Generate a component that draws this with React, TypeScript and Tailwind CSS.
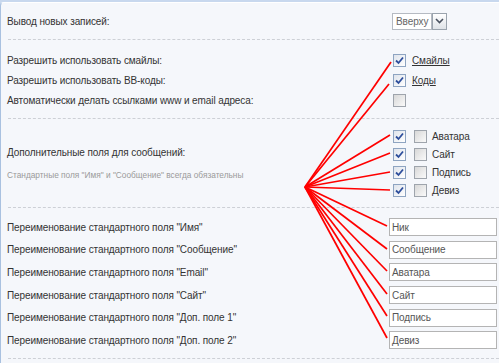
import React from 'react'

function Check({ on }: { on: boolean }) {
  return (
    <span
      className={`w-[13px] h-[13px] border flex items-center justify-center shrink-0 ${
        on ? 'border-[#8ea4c1] bg-gradient-to-br from-[#dfe4ec] to-white' : 'border-[#9ea4ac] bg-gradient-to-br from-[#d8d8d8] to-[#fafafa]'
      }`}
    >
      {on && (
        <svg width="9" height="9" viewBox="0 0 9 9">
          <path d="M1 4.5 L3.5 7 L8 1.5" fill="none" stroke="#2d4e9c" strokeWidth="1.8" />
        </svg>
      )}
    </span>
  )
}

function Divider() {
  return <div className="ml-[1px] h-0 border-t border-dashed border-[#cdd0d6]" />
}

const extraFields = ['Аватара', 'Сайт', 'Подпись', 'Девиз']

const renames = [
  { label: 'Имя', value: 'Ник' },
  { label: 'Сообщение', value: 'Сообщение' },
  { label: 'Email', value: 'Аватара' },
  { label: 'Сайт', value: 'Сайт' },
  { label: 'Доп. поле 1', value: 'Подпись' },
  { label: 'Доп. поле 2', value: 'Девиз' },
]

// куда тянутся красные линии из одной точки
const focus = [305, 187]
const targets = [
  [391, 62], [389, 84],
  [390, 135], [390, 153], [390, 172], [390, 190],
  [387, 226], [387, 249], [387, 271], [387, 294], [387, 316], [387, 338],
]

export default function App() {
  return (
    <div className="relative w-[499px] h-[363px] overflow-hidden bg-[#c8d8ee] pt-[2px] font-['Liberation_Sans',Arial,sans-serif] text-[10px] tracking-[-0.1px] text-[#333]">
      <div className="h-full bg-[#f5f7fb] border-l border-t border-l-[#a9c1e0] border-t-white rounded-tl-[4px] pl-[6px]">
        {/* вывод */}
        <div className="flex items-center h-[36px]">
          <span className="flex-1">Вывод новых записей:</span>
          <div className="w-[110px] pl-[3px]">
            <div className="flex h-[17px] w-[55px]">
              <div className="w-[40px] border border-[#b5bac2] bg-white text-[#666] flex items-center pl-[3px]">Вверху</div>
              <div className="w-[15px] border border-[#9aa3ad] bg-gradient-to-b from-white to-[#dfe3e8] flex items-center justify-center">
                <svg width="9" height="6" viewBox="0 0 9 6">
                  <path d="M1 1 L4.5 4.5 L8 1" fill="none" stroke="#4a5260" strokeWidth="1.6" />
                </svg>
              </div>
            </div>
          </div>
        </div>
        <Divider />

        {/* смайлы / коды */}
        <div className="pt-[10px] pb-[8px]">
          <div className="flex items-center h-[20px]">
            <span className="flex-1">Разрешить использовать смайлы:</span>
            <div className="w-[110px] pl-[4px] flex items-center gap-[6px]">
              <Check on />
              <span className="underline">Смайлы</span>
            </div>
          </div>
          <div className="flex items-center h-[20px]">
            <span className="flex-1">Разрешить использовать BB-коды:</span>
            <div className="w-[110px] pl-[4px] flex items-center gap-[6px]">
              <Check on />
              <span className="underline">Коды</span>
            </div>
          </div>
          <div className="flex items-center h-[20px]">
            <span className="flex-1">Автоматически делать ссылками www и email адреса:</span>
            <div className="w-[110px] pl-[4px] flex items-center">
              <Check on={false} />
            </div>
          </div>
        </div>
        <Divider />

        {/* доп поля */}
        <div className="flex pt-[8px] pb-[8px]">
          <div className="flex-1 flex flex-col justify-center gap-[9px]">
            <span>Дополнительные поля для сообщений:</span>
            <span className="text-[8.3px] tracking-normal text-[#9a9a9a]">Стандартные поля "Имя" и "Сообщение" всегда обязательны</span>
          </div>
          <div className="w-[110px] pl-[4px] flex flex-col">
            {extraFields.map(f => (
              <div key={f} className="flex items-center h-[18px]">
                <Check on />
                <span className="ml-[8px]"><Check on={false} /></span>
                <span className="ml-[5px]">{f}</span>
              </div>
            ))}
          </div>
        </div>
        <Divider />

        {/* переименование */}
        <div className="pt-[8px] pb-[6px]">
          {renames.map(r => (
            <div key={r.label} className="flex items-center h-[22.6px]">
              <span className="flex-1">Переименование стандартного поля "{r.label}"</span>
              <div className="w-[110px] pr-[2px]">
                <div className="h-[18px] border border-[#b4b4b4] bg-white text-[#555] flex items-center pl-[2px]">{r.value}</div>
              </div>
            </div>
          ))}
        </div>
        <Divider />
      </div>

      <svg className="absolute inset-0 pointer-events-none" width="499" height="363">
        {targets.map(([x, y], i) => (
          <line key={i} x1={focus[0]} y1={focus[1]} x2={x} y2={y} stroke="#f00" strokeWidth="1.7" />
        ))}
      </svg>
    </div>
  )
}
